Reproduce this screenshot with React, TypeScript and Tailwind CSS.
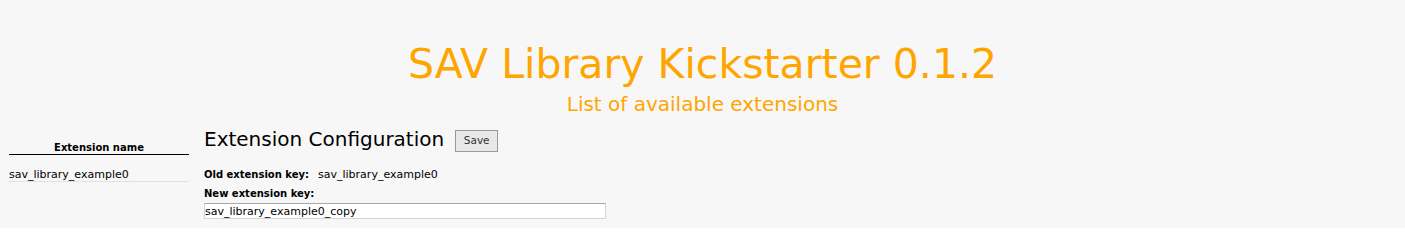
export default function App() {
  return (
    <div className="min-h-[228px] w-full bg-[#f7f7f7] font-['DejaVu_Sans',Verdana,sans-serif] text-black">
      {/* Header */}
      <div className="flex flex-col items-center pt-[44px]">
        <h1 className="text-[41px] leading-[41px] text-[#ffa500]">SAV Library Kickstarter 0.1.2</h1>
        <h2 className="mt-[9px] text-[20px] leading-[20px] text-[#ffa500]">List of available extensions</h2>
      </div>

      <div className="mt-[15px] flex">
        {/* Extensions list */}
        <div className="ml-[9px] w-[180px] pt-[13px]">
          <div className="border-b border-black text-center text-[10px] font-bold leading-[12px]">
            Extension name
          </div>
          <div className="mt-[13px] border-b border-[#e2e2e2] text-[11px] leading-[13px]">
            sav_library_example0
          </div>
        </div>

        {/* Configuration */}
        <div className="ml-[15px] flex flex-col">
          <div className="flex items-start gap-[11px]">
            <span className="text-[20px] leading-[20px]">Extension Configuration</span>
            <button className="mt-[1px] flex h-[22px] w-[43px] items-center justify-center border border-[#999] bg-[#e8e8e8] text-[10.5px] text-[#333]">
              Save
            </button>
          </div>
          <div className="mt-[16px] flex items-baseline gap-[9px] leading-[13px]">
            <span className="text-[10px] font-bold">Old extension key:</span>
            <span className="text-[11px]">sav_library_example0</span>
          </div>
          <div className="mt-[6px] text-[10px] font-bold leading-[13px]">New extension key:</div>
          <input
            className="mt-[3px] h-[16px] w-[402px] border border-[#d4d4d4] border-t-[#a8a8a8] bg-white px-0 text-[11px] leading-[14px] outline-none"
            defaultValue="sav_library_example0_copy"
          />
        </div>
      </div>
    </div>
  );
}
